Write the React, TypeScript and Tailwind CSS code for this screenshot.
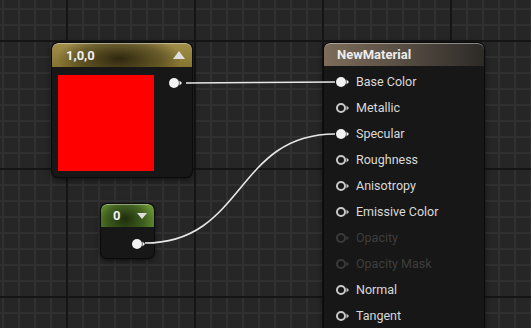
import React from "react";

type PinState = "connected" | "open" | "disabled";

function Pin({ state }: { state: PinState }) {
  const color = state === "disabled" ? "#3a3a3a" : state === "connected" ? "#f2f2f2" : "#c9c9c9";
  return (
    <svg width="16" height="12" viewBox="0 0 16 12" className="shrink-0">
      {state === "connected" ? (
        <circle cx="6" cy="6" r="5" fill={color} />
      ) : (
        <circle cx="6" cy="6" r="4" fill="none" stroke={color} strokeWidth="2" />
      )}
      <path d="M11.5 3.5 L14 6 L11.5 8.5 Z" fill={color} />
    </svg>
  );
}

const rows: { label: string; state: PinState }[] = [
  { label: "Base Color", state: "connected" },
  { label: "Metallic", state: "open" },
  { label: "Specular", state: "connected" },
  { label: "Roughness", state: "open" },
  { label: "Anisotropy", state: "open" },
  { label: "Emissive Color", state: "open" },
  { label: "Opacity", state: "disabled" },
  { label: "Opacity Mask", state: "disabled" },
  { label: "Normal", state: "open" },
  { label: "Tangent", state: "open" },
];

export default function App() {
  return (
    <div
      className="relative w-[531px] h-[328px] overflow-hidden bg-[#262626] font-['Roboto',sans-serif] [background-image:linear-gradient(to_right,#151515_2px,transparent_2px),linear-gradient(to_bottom,#151515_2px,transparent_2px),linear-gradient(to_right,#303030_2px,transparent_2px),linear-gradient(to_bottom,#303030_2px,transparent_2px)] [background-size:128px_128px,128px_128px,16px_16px,16px_16px] [background-position:66px_0,0_40px,2px_0,0_8px]"
    >
      {/* Constant3Vector node */}
      <div className="absolute left-[52px] top-[43px] w-[140px] h-[134px] rounded-[6px] bg-[#161716] shadow-[0_0_0_1px_#0a0a0a,0_2px_6px_rgba(0,0,0,0.7)] flex flex-col overflow-hidden">
        <div className="h-[24px] shrink-0 flex items-center justify-between pl-[14px] pr-[7px] rounded-t-[6px] shadow-[inset_0_1px_0_rgba(220,220,220,0.55)] [background-image:radial-gradient(ellipse_50%_110%_at_48%_65%,rgba(40,33,12,0.92),rgba(40,33,12,0.4)_60%,transparent_90%),linear-gradient(to_bottom,#a18f4a,#85732f)]">
          <span className="text-[13px] font-bold text-[#f0f0f0] leading-none">1,0,0</span>
          <svg width="12" height="8" viewBox="0 0 12 8">
            <path d="M6 0 L12 8 L0 8 Z" fill="#dedede" />
          </svg>
        </div>
        <div className="flex items-start pt-[8px] pl-[6px]">
          <div className="w-[96px] h-[96px] shrink-0 bg-[#ff0000]" />
          <div className="ml-[14px] mt-[2px]">
            <Pin state="connected" />
          </div>
        </div>
      </div>

      {/* Scalar node */}
      <div className="absolute left-[101px] top-[204px] w-[53px] h-[54px] rounded-[6px] bg-[#161716] shadow-[0_0_0_1px_#0a0a0a,0_2px_6px_rgba(0,0,0,0.7)] flex flex-col overflow-hidden">
        <div className="h-[23px] shrink-0 flex items-center pl-[12px] pr-[6px] gap-[17px] rounded-t-[6px] shadow-[inset_0_1px_0_rgba(220,220,220,0.5)] [background-image:radial-gradient(ellipse_60%_110%_at_45%_65%,rgba(22,36,10,0.9),rgba(22,36,10,0.4)_60%,transparent_90%),linear-gradient(to_bottom,#6a9636,#557f27)]">
          <span className="text-[13px] font-bold text-[#f0f0f0] leading-none">0</span>
          <svg width="10" height="6" viewBox="0 0 10 6">
            <path d="M0 0 L10 0 L5 6 Z" fill="#dedede" />
          </svg>
        </div>
        <div className="flex justify-end pt-[11px] pr-[7px]">
          <Pin state="connected" />
        </div>
      </div>

      {/* Material result node */}
      <div className="absolute left-[324px] top-[43px] w-[160px] h-[300px] rounded-[6px] bg-[#161716] shadow-[0_0_0_1px_#0a0a0a,0_2px_6px_rgba(0,0,0,0.7)] flex flex-col overflow-hidden">
        <div className="h-[23px] shrink-0 flex items-center pl-[13px] rounded-t-[6px] shadow-[inset_0_1px_0_rgba(220,220,220,0.5)] [background-image:linear-gradient(to_right,#7d6d5a,#5b5045_45%,#2c2a27)]">
          <span className="text-[13px] font-bold text-[#ececec] leading-none">NewMaterial</span>
        </div>
        <div className="flex flex-col pt-[3px] pl-[11px]">
          {rows.map((r) => (
            <div key={r.label} className="h-[26px] shrink-0 flex items-center gap-[5px]">
              <Pin state={r.state} />
              <span
                className={
                  r.state === "disabled"
                    ? "text-[12.5px] text-[#3e3e3e]"
                    : "text-[12.5px] text-[#dadada]"
                }
              >
                {r.label}
              </span>
            </div>
          ))}
        </div>
      </div>

      {/* Wires */}
      <svg className="absolute left-0 top-0 pointer-events-none" width="531" height="328">
        <path d="M186 83 C 250 83, 270 82, 335 82" stroke="#e8e8e8" strokeWidth="1.6" fill="none" />
        <path d="M145 243 C 245 243, 235 134, 335 134" stroke="#e8e8e8" strokeWidth="1.6" fill="none" />
      </svg>
    </div>
  );
}
